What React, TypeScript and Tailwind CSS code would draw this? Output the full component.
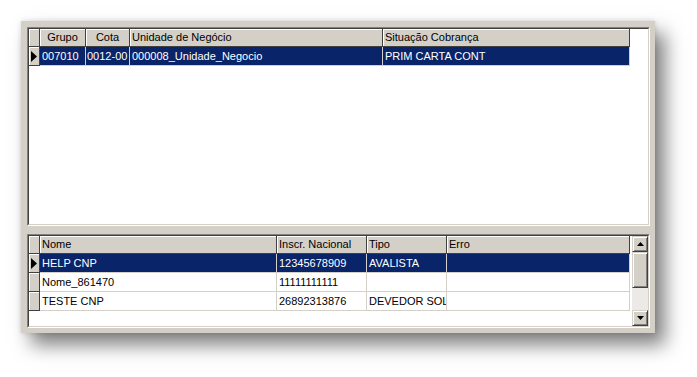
import React from "react";

const hdr =
  "h-[18px] shrink-0 bg-[#d4d0c8] border-r border-b border-[#404040] shadow-[inset_1px_1px_0_#fff] px-[2px] leading-[17px] whitespace-nowrap overflow-hidden text-black";
const cell =
  "h-[19px] shrink-0 border-r border-b border-[#d4d0c8] leading-[18px] whitespace-nowrap overflow-hidden";
const raised =
  "border border-t-[#d4d0c8] border-l-[#d4d0c8] border-b-[#404040] border-r-[#404040] shadow-[inset_1px_1px_0_#fff,inset_-1px_-1px_0_#808080] bg-[#d4d0c8]";

function Arrow({ dir }: { dir: "right" | "up" | "down" }) {
  if (dir === "right")
    return (
      <svg width="6" height="11" viewBox="0 0 6 11">
        <polygon points="0,0 6,5.5 0,11" fill="#000" />
      </svg>
    );
  return (
    <svg width="7" height="4" viewBox="0 0 7 4">
      <polygon points={dir === "up" ? "3.5,0 7,4 0,4" : "0,0 7,0 3.5,4"} fill="#000" />
    </svg>
  );
}

function Indicator({ head, current }: { head?: boolean; current?: boolean }) {
  return (
    <div
      className={`w-[11px] shrink-0 ${head ? "h-[18px]" : "h-[19px]"} bg-[#d4d0c8] border-r border-b border-[#404040] shadow-[inset_1px_1px_0_#fff] flex items-center justify-center`}
    >
      {current && <Arrow dir="right" />}
    </div>
  );
}

function Sunken({ className, children }: { className?: string; children: React.ReactNode }) {
  return (
    <div className={`border border-t-[#808080] border-l-[#808080] border-b-white border-r-white ${className ?? ""}`}>
      <div className="h-full border border-t-[#404040] border-l-[#404040] border-b-[#d4d0c8] border-r-[#d4d0c8] bg-white overflow-hidden">
        {children}
      </div>
    </div>
  );
}

type Col = { name: string; w: string; center?: boolean; pad?: string };

const topCols: Col[] = [
  { name: "Grupo", w: "w-[46px]", center: true },
  { name: "Cota", w: "w-[44px]", center: true, pad: "pl-[1px]" },
  { name: "Unidade de Negócio", w: "w-[253px]" },
  { name: "Situação Cobrança", w: "w-[247px]" },
];

const topRows = [["007010", "0012-00", "000008_Unidade_Negocio", "PRIM CARTA CONT"]];

const botCols: Col[] = [
  { name: "Nome", w: "w-[237px]" },
  { name: "Inscr. Nacional", w: "w-[90px]" },
  { name: "Tipo", w: "w-[80px]" },
  { name: "Erro", w: "w-[183px]" },
];

const botRows = [
  ["HELP CNP", "12345678909", "AVALISTA", ""],
  ["Nome_861470", "11111111111", "", ""],
  ["TESTE CNP", "26892313876", "DEVEDOR SOLIDÁRIO", ""],
];

function Grid({ cols, rows }: { cols: Col[]; rows: string[][] }) {
  return (
    <div className="flex flex-col">
      <div className="flex">
        <Indicator head />
        {cols.map(c => (
          <div key={c.name} className={`${hdr} ${c.w} ${c.center ? "text-center" : ""}`}>
            {c.name}
          </div>
        ))}
      </div>
      {rows.map((r, i) => (
        <div key={i} className="flex">
          <Indicator current={i === 0} />
          {r.map((v, j) => (
            <div
              key={j}
              className={`${cell} ${cols[j].w} ${cols[j].pad ?? "px-[2px]"} ${i === 0 ? "bg-[#0a246a] text-white" : "bg-white text-black"}`}
            >
              {v}
            </div>
          ))}
        </div>
      ))}
    </div>
  );
}

export default function App() {
  return (
    <div className="min-h-screen bg-white pt-[21px] pl-[21px] font-['Liberation_Sans',Arial,sans-serif] text-[11px]">
      <div className="w-[634px] h-[312px] bg-[#d4d0c8] shadow-[10px_12px_18px_rgba(0,0,0,0.5),0_0_5px_rgba(0,0,0,0.15)] pt-[6px] pl-[6px] pr-[5px] pb-[5px] flex flex-col gap-[8px]">
        <Sunken className="h-[199px]">
          <Grid cols={topCols} rows={topRows} />
        </Sunken>
        <Sunken className="flex-1">
          <div className="flex h-full">
            <Grid cols={botCols} rows={botRows} />
            <div className="flex-1" />
            <div className="w-[16px] flex flex-col">
              <div className={`${raised} h-[16px] flex items-center justify-center`}>
                <Arrow dir="up" />
              </div>
              <div className={`${raised} h-[36px]`} />
              <div className="flex-1 bg-[#eceae6]" />
              <div className={`${raised} h-[16px] flex items-center justify-center`}>
                <Arrow dir="down" />
              </div>
            </div>
          </div>
        </Sunken>
      </div>
    </div>
  );
}
